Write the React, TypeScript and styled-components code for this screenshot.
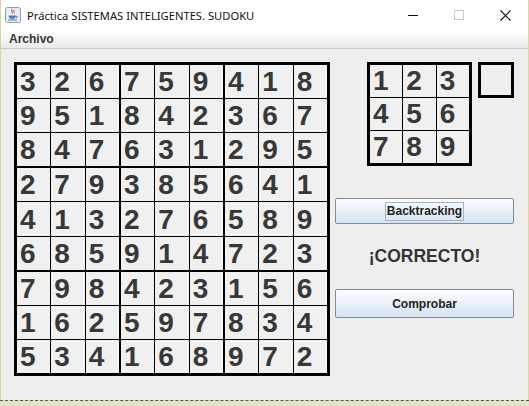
import React from 'react';
import styled, { createGlobalStyle } from 'styled-components';

const solution: number[][] = [
  [3, 2, 6, 7, 5, 9, 4, 1, 8],
  [9, 5, 1, 8, 4, 2, 3, 6, 7],
  [8, 4, 7, 6, 3, 1, 2, 9, 5],
  [2, 7, 9, 3, 8, 5, 6, 4, 1],
  [4, 1, 3, 2, 7, 6, 5, 8, 9],
  [6, 8, 5, 9, 1, 4, 7, 2, 3],
  [7, 9, 8, 4, 2, 3, 1, 5, 6],
  [1, 6, 2, 5, 9, 7, 8, 3, 4],
  [5, 3, 4, 1, 6, 8, 9, 7, 2],
];

const blockDigits = (br: number, bc: number) => {
  const out: number[] = [];
  for (let r = 0; r < 3; r++) {
    for (let c = 0; c < 3; c++) {
      out.push(solution[br * 3 + r][bc * 3 + c]);
    }
  }
  return out;
};

const JavaIcon = () => (
  <svg width="16" height="16" viewBox="0 0 16 16">
    <rect x="0.5" y="0.5" width="15" height="15" rx="2" fill="#e9eef5" stroke="#8a9bb0" />
    <path d="M7 2c-1.5 1.5 1.5 2.5 0 4.5M9 3c-1 1 1 1.8 0 3" stroke="#e0592a" strokeWidth="1.1" fill="none" />
    <path d="M3.5 8.5h7.5c0 2.5-1.6 3.5-3.7 3.5S3.5 11 3.5 8.5z" fill="#4d7cb8" />
    <path d="M11 9.2c1.8-.3 1.8 1.8 0 1.8" stroke="#4d7cb8" strokeWidth="1" fill="none" />
    <path d="M3 13h9" stroke="#4d7cb8" strokeWidth="1" />
  </svg>
);

const App: React.FC = () => {
  return (
    <>
      <GlobalStyle />
      <Window>
        <TitleBar>
          <TitleLeft>
            <JavaIcon />
            <TitleText>Práctica SISTEMAS INTELIGENTES. SUDOKU</TitleText>
          </TitleLeft>
          <Controls>
            <ControlButton>
              <svg width="10" height="10" viewBox="0 0 10 10">
                <path d="M0 5.5h10" stroke="#111" strokeWidth="1" />
              </svg>
            </ControlButton>
            <ControlButton>
              <svg width="10" height="10" viewBox="0 0 10 10">
                <rect x="0.5" y="0.5" width="9" height="9" fill="none" stroke="#c8c8c8" />
              </svg>
            </ControlButton>
            <ControlButton>
              <svg width="11" height="11" viewBox="0 0 11 11">
                <path d="M0.5 0.5l10 10M10.5 0.5l-10 10" stroke="#111" strokeWidth="1.1" />
              </svg>
            </ControlButton>
          </Controls>
        </TitleBar>
        <MenuBar>
          <MenuItem>Archivo</MenuItem>
        </MenuBar>
        <Content>
          <Board>
            {[0, 1, 2].map(br =>
              [0, 1, 2].map(bc => (
                <Block key={`${br}-${bc}`}>
                  {blockDigits(br, bc).map((d, i) => (
                    <Cell key={i}>{d}</Cell>
                  ))}
                </Block>
              ))
            )}
          </Board>
          <SidePanel>
            <PickerRow>
              <MiniGrid>
                {[1, 2, 3, 4, 5, 6, 7, 8, 9].map(n => (
                  <Cell key={n}>{n}</Cell>
                ))}
              </MiniGrid>
              <SelectedBox />
            </PickerRow>
            <ActionButton $height={26} $top={32}>
              <FocusRing>Backtracking</FocusRing>
            </ActionButton>
            <Status>¡CORRECTO!</Status>
            <ActionButton $height={29} $top={0}>Comprobar</ActionButton>
          </SidePanel>
        </Content>
      </Window>
      <Desktop />
    </>
  );
};

const GlobalStyle = createGlobalStyle`
  html, body {
    margin: 0;
    padding: 0;
    background: #eeeeee;
  }
  * {
    box-sizing: border-box;
  }
`;

const Window = styled.div`
  width: 529px;
  height: 400px;
  display: flex;
  flex-direction: column;
  background: #eeeeee;
  border-left: 1px solid #dcd79c;
  border-right: 1px solid #dcd79c;
  font-family: "Liberation Sans", Arial, sans-serif;
`;

const TitleBar = styled.div`
  height: 30px;
  display: flex;
  align-items: center;
  justify-content: space-between;
  background: #ffffff;
`;

const TitleLeft = styled.div`
  display: flex;
  align-items: center;
  gap: 6px;
  padding-left: 4px;
`;

const TitleText = styled.span`
  font-family: "Noto Sans", "Open Sans", sans-serif;
  font-size: 11.2px;
  color: #111;
`;

const Controls = styled.div`
  display: flex;
  height: 100%;
`;

const ControlButton = styled.div`
  width: 46px;
  height: 100%;
  display: flex;
  align-items: center;
  justify-content: center;
`;

const MenuBar = styled.div`
  height: 19px;
  display: flex;
  align-items: center;
  padding-left: 8px;
  background: linear-gradient(#ffffff, #f3f3f3 60%, #e9e9e9);
  border-bottom: 1px solid #c9c9c9;
`;

const MenuItem = styled.span`
  font-size: 12px;
  font-weight: bold;
  color: #333;
`;

const Content = styled.div`
  flex: 1;
  display: flex;
  align-items: flex-start;
  padding: 13px 0 0 13px;
`;

const Board = styled.div`
  width: 316px;
  height: 314px;
  border: 2px solid #000;
  display: grid;
  grid-template-columns: repeat(3, 1fr);
  grid-template-rows: repeat(3, 1fr);
`;

const Block = styled.div`
  border: 1px solid #000;
  background: #000;
  display: grid;
  grid-template-columns: repeat(3, 1fr);
  grid-template-rows: repeat(3, 1fr);
  gap: 1px;
`;

const Cell = styled.div`
  background: #f0f0f0;
  display: flex;
  align-items: flex-end;
  padding: 0 0 2px 3px;
  font-family: "Liberation Sans", Arial, sans-serif;
  font-weight: bold;
  font-size: 28px;
  line-height: 1;
  color: #383838;
  overflow: hidden;
`;

const SidePanel = styled.div`
  width: 179px;
  margin-left: 5px;
  display: flex;
  flex-direction: column;
`;

const PickerRow = styled.div`
  display: flex;
  align-items: flex-start;
  gap: 6px;
  padding-left: 32px;
`;

const MiniGrid = styled.div`
  width: 105px;
  height: 104px;
  border: 3px solid #000;
  background: #000;
  display: grid;
  grid-template-columns: repeat(3, 1fr);
  grid-template-rows: repeat(3, 1fr);
  gap: 1px;
`;

const SelectedBox = styled.div`
  width: 36px;
  height: 36px;
  border: 3px solid #000;
  background: #eeeeee;
`;

const ActionButton = styled.div<{ $height: number; $top: number }>`
  height: ${p => p.$height}px;
  margin-top: ${p => p.$top}px;
  display: flex;
  align-items: center;
  justify-content: center;
  border: 1px solid #7d8b9c;
  border-radius: 2px;
  background: linear-gradient(#fbfcfe, #eaf1f9 45%, #d5e3f2);
  font-size: 12px;
  font-weight: bold;
  color: #222;
`;

const FocusRing = styled.span`
  border: 1px solid #a4b3c6;
  padding: 2px 1px;
  line-height: 13px;
`;

const Status = styled.div`
  height: 65px;
  display: flex;
  align-items: center;
  justify-content: center;
  font-size: 17.5px;
  font-weight: bold;
  color: #333;
`;

const Desktop = styled.div`
  height: 6px;
  width: 529px;
  border-top: 1px dashed #555;
  background: #e4e2c8;
`;

export default App;
